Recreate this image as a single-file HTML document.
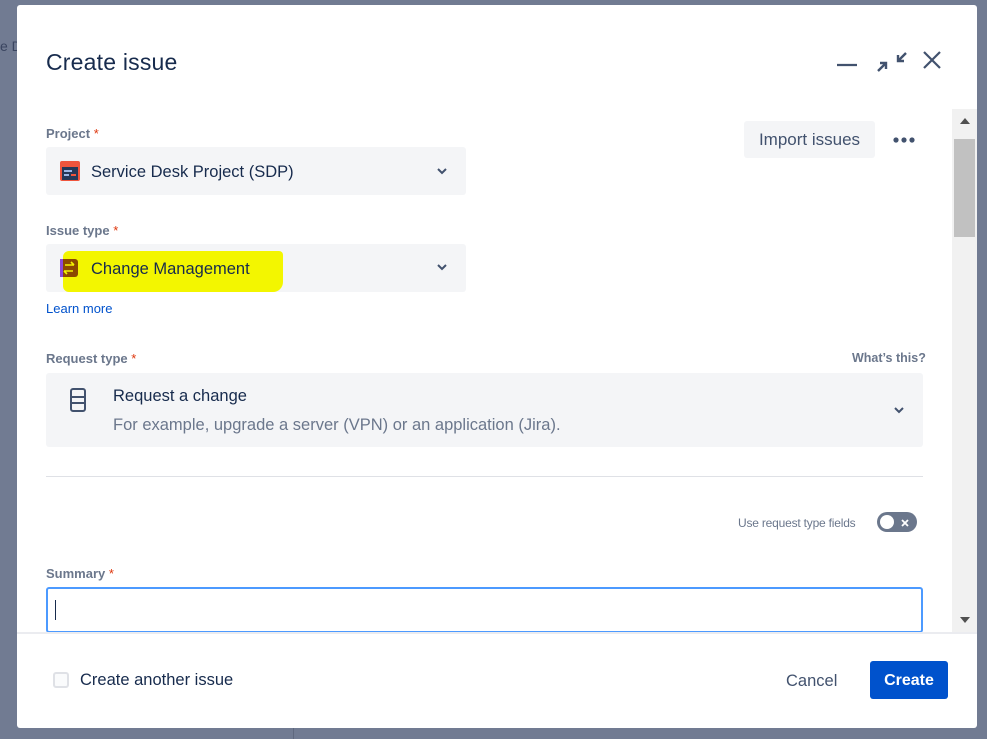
<!DOCTYPE html>
<html><head><style>
*{box-sizing:border-box;margin:0;padding:0}
body{width:987px;height:739px;background:#717b92;font-family:"Liberation Sans",sans-serif;position:relative;overflow:hidden;color:#172b4d}
.bgtxt{position:absolute;left:0;top:38px;color:#3a4560;font-size:14px}
.bgline{position:absolute;left:293px;top:728px;width:1px;height:11px;background:#5f687e}
.modal{position:absolute;left:17px;top:5px;width:960px;height:723px;background:#fff;border-radius:3px}
.a{position:absolute}
h1{position:absolute;left:29px;top:44px;font-size:23px;font-weight:normal;color:#172b4d;letter-spacing:0.2px}
.lbl{font-size:13px;color:#6b778c;font-weight:bold}
.lbl b{color:#de350b;font-weight:normal}
.sel{background:#f4f5f7;border-radius:3px}
.sb{position:absolute;left:935px;top:104px;width:25px;height:523px;background:#f1f1f1}
</style></head><body>
<div class="bgtxt">e D</div>
<div class="bgline"></div>
<div class="modal">
<h1>Create issue</h1>
<svg class="a" style="left:818px;top:44px" width="120" height="26">
<path d="M2 16h20" stroke="#42526e" stroke-width="2.2"/>
<path d="M43 22l8-8M45 14h6v6M71 4l-8 8M63 6v6h6" stroke="#42526e" stroke-width="2.4" fill="none"/>
<path d="M89 3l16 16M105 3l-16 16" stroke="#42526e" stroke-width="2.2"/>
</svg>
<div class="a lbl" style="left:29px;top:121px">Project <b>*</b></div>
<div class="a sel" style="left:29px;top:142px;width:420px;height:48px"></div>
<svg class="a" style="left:43px;top:156px" width="20" height="20"><rect width="20" height="20" rx="2" fill="#f0553d"/><rect x="2" y="6" width="16" height="13" fill="#253858"/><rect x="4" y="9" width="8" height="2" fill="#9db8e6"/><rect x="4" y="13" width="5" height="2" fill="#9db8e6"/><rect x="11" y="13" width="5" height="2" fill="#f0553d"/></svg>
<div class="a" style="left:74px;top:158px;font-size:16.5px;color:#172b4d">Service Desk Project (SDP)</div>
<svg class="a" style="left:419px;top:161px" width="12" height="10"><path d="M2 3l4 4 4-4" stroke="#42526e" stroke-width="2" fill="none"/></svg>
<div class="a lbl" style="left:29px;top:218px">Issue type <b>*</b></div>
<div class="a sel" style="left:29px;top:239px;width:420px;height:48px"></div>
<div class="a" style="left:46px;top:246px;width:220px;height:41px;background:#f3f600;border-radius:6px 4px 10px 6px"></div>
<svg class="a" style="left:43px;top:254px" width="18" height="18"><rect width="18" height="18" rx="3" fill="#8b4a00"/><rect width="3" height="18" fill="#8b4ad8"/><path d="M5 6h9M11 3l3 3M13 12H4M7 15l-3-3" stroke="#f3f600" stroke-width="1.6" fill="none"/></svg>
<div class="a" style="left:74px;top:255px;font-size:16.5px;color:#172b4d">Change Management</div>
<svg class="a" style="left:419px;top:257px" width="12" height="10"><path d="M2 3l4 4 4-4" stroke="#42526e" stroke-width="2" fill="none"/></svg>
<div class="a" style="left:29px;top:296px;font-size:13px;color:#0052cc">Learn more</div>
<div class="a" style="left:727px;top:116px;width:131px;height:37px;background:#f4f5f7;border-radius:3px;font-size:17px;color:#42526e;text-align:center;line-height:37px">Import issues</div>
<svg class="a" style="left:875px;top:131px" width="24" height="8"><circle cx="4" cy="4" r="2.6" fill="#42526e"/><circle cx="12" cy="4" r="2.6" fill="#42526e"/><circle cx="20" cy="4" r="2.6" fill="#42526e"/></svg>
<div class="a lbl" style="left:29px;top:346px">Request type <b>*</b></div>
<div class="a lbl" style="left:835px;top:346px;font-size:12.5px">What’s this?</div>
<div class="a sel" style="left:29px;top:368px;width:877px;height:74px"></div>
<svg class="a" style="left:52px;top:382px" width="18" height="26"><rect x="2" y="2" width="14" height="22" rx="2" stroke="#42526e" stroke-width="2" fill="none"/><path d="M2 10h14M2 16h14" stroke="#42526e" stroke-width="2"/></svg>
<div class="a" style="left:96px;top:382px;font-size:16.5px;color:#172b4d">Request a change</div>
<div class="a" style="left:96px;top:411px;font-size:16.5px;color:#6b778c">For example, upgrade a server (VPN) or an application (Jira).</div>
<svg class="a" style="left:876px;top:400px" width="12" height="10"><path d="M2 3l4 4 4-4" stroke="#42526e" stroke-width="2" fill="none"/></svg>
<div class="a" style="left:29px;top:471px;width:877px;height:1px;background:#dfe1e6"></div>
<div class="a" style="left:721px;top:511px;font-size:12px;color:#6b778c;letter-spacing:-0.2px">Use request type fields</div>
<div class="a" style="left:860px;top:507px;width:40px;height:20px;border-radius:10px;background:#6b778c"></div>
<div class="a" style="left:863px;top:510px;width:14px;height:14px;border-radius:7px;background:#fff"></div>
<svg class="a" style="left:883px;top:513px" width="10" height="10"><path d="M2 2l6 6M8 2l-6 6" stroke="#fff" stroke-width="1.8"/></svg>
<div class="a lbl" style="left:29px;top:561px">Summary <b>*</b></div>
<div class="a" style="left:29px;top:582px;width:877px;height:46px;border:2px solid #4c9aff;border-radius:3px"></div>
<div class="a" style="left:38px;top:595px;width:1px;height:20px;background:#172b4d"></div>
<div class="sb"><div class="a" style="left:2px;top:30px;width:21px;height:98px;background:#c1c1c1"></div>
<svg class="a" style="left:7px;top:8px" width="12" height="8"><path d="M1 7l5-6 5 6z" fill="#505050"/></svg>
<svg class="a" style="left:7px;top:507px" width="12" height="8"><path d="M1 1l5 6 5-6z" fill="#505050"/></svg></div>
<div class="a" style="left:0;top:627px;width:960px;height:2px;background:#ebecf0"></div>
<div class="a" style="left:36px;top:667px;width:16px;height:16px;border:2px solid #dfe1e6;border-radius:3px;background:#fafbfc"></div>
<div class="a" style="left:63px;top:666px;font-size:16.5px;color:#172b4d">Create another issue</div>
<div class="a" style="left:769px;top:667px;font-size:16.5px;color:#42526e">Cancel</div>
<div class="a" style="left:853px;top:656px;width:78px;height:38px;background:#0052cc;border-radius:3px;color:#fff;font-size:16px;font-weight:bold;text-align:center;line-height:40px">Create</div>
</div>
</body></html>
